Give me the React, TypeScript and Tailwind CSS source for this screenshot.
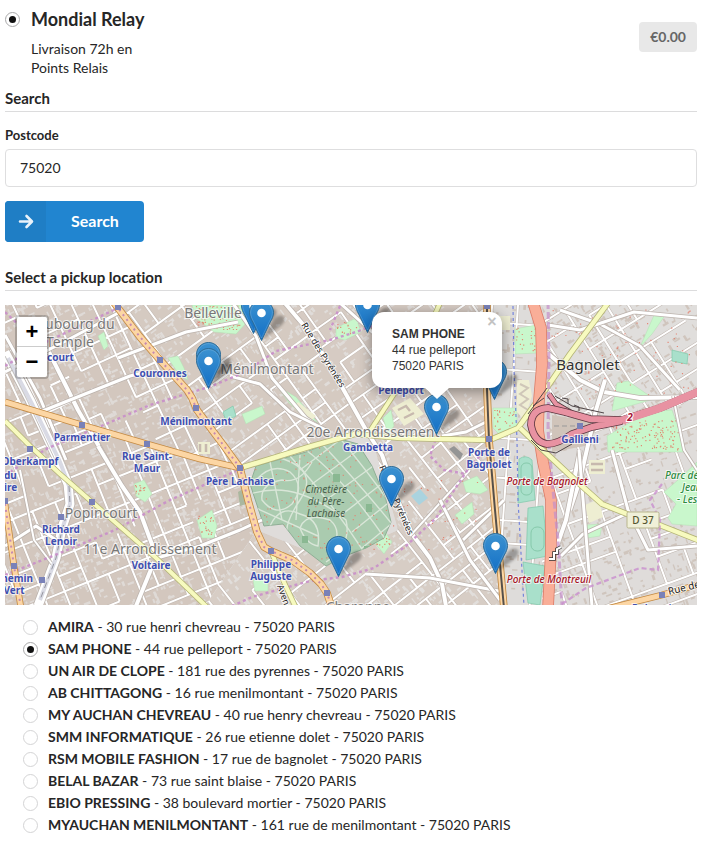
import React, { useState } from "react";

const LATO = "font-['Lato','Noto_Sans',sans-serif]";

type Pickup = { name: string; address: string };

const pickups: Pickup[] = [
  { name: "AMIRA", address: "30 rue henri chevreau - 75020 PARIS" },
  { name: "SAM PHONE", address: "44 rue pelleport - 75020 PARIS" },
  { name: "UN AIR DE CLOPE", address: "181 rue des pyrennes - 75020 PARIS" },
  { name: "AB CHITTAGONG", address: "16 rue menilmontant - 75020 PARIS" },
  { name: "MY AUCHAN CHEVREAU", address: "40 rue henry chevreau - 75020 PARIS" },
  { name: "SMM INFORMATIQUE", address: "26 rue etienne dolet - 75020 PARIS" },
  { name: "RSM MOBILE FASHION", address: "17 rue de bagnolet - 75020 PARIS" },
  { name: "BELAL BAZAR", address: "73 rue saint blaise - 75020 PARIS" },
  { name: "EBIO PRESSING", address: "38 boulevard mortier - 75020 PARIS" },
  { name: "MYAUCHAN MENILMONTANT", address: "161 rue de menilmontant - 75020 PARIS" },
];

const radioClass =
  "grid size-[15px] shrink-0 appearance-none place-items-center rounded-full border border-[#d4d4d5] bg-white checked:border-[#a9a9aa] checked:before:size-[7px] checked:before:rounded-full checked:before:bg-[#111111] checked:before:content-['']";

function random(seed: number) {
  let s = seed;
  return () => {
    s = (s * 16807) % 2147483647;
    return s / 2147483647;
  };
}

type District = {
  id: string;
  area: string;
  cx: number;
  cy: number;
  r: number;
  angle: number;
  fill: string;
  houses: string;
  density: number;
  cell: number;
};

const districts: District[] = [
  { id: "d1", area: "M0 300H115L160 360L196 408L240 468L0 400Z", cx: 110, cy: 380, r: 160, angle: -25, fill: "#d3c7be", houses: "#e0dddb", density: 9, cell: 18 },
  { id: "d2", area: "M0 400L240 468L257 530L205 606H0Z", cx: 110, cy: 510, r: 170, angle: -22, fill: "#d3c7be", houses: "#e0dddb", density: 9, cell: 18 },
  { id: "d3", area: "M115 300H290L340 380L370 432L240 468L196 408Z", cx: 245, cy: 380, r: 150, angle: -36, fill: "#d5cac1", houses: "#e2dfdd", density: 8, cell: 21 },
  { id: "d4", area: "M285 300H490V440L370 432L340 380Z", cx: 400, cy: 370, r: 140, angle: 55, fill: "#d6cbc3", houses: "#e2dfdd", density: 9, cell: 22 },
  { id: "d5", area: "M370 432L490 440L504 606H205L257 530L330 560L398 530Z", cx: 370, cy: 520, r: 190, angle: -38, fill: "#d7cdc5", houses: "#e3e0de", density: 9, cell: 21 },
  { id: "d6", area: "M487 300H542V606H504Z", cx: 515, cy: 450, r: 180, angle: 4, fill: "#dedcda", houses: "#cabdb3", density: 8, cell: 28 },
  { id: "d7", area: "M542 300H700V400L550 440Z", cx: 620, cy: 360, r: 130, angle: 58, fill: "#e0dedc", houses: "#cdc1b7", density: 8, cell: 24 },
  { id: "d8", area: "M542 440L700 400V606H542Z", cx: 620, cy: 520, r: 145, angle: 70, fill: "#dfdcda", houses: "#cdc1b7", density: 10, cell: 23 },
];

function buildDistrict(d: District, seed: number) {
  const rnd = random(seed);
  const xs: number[] = [];
  const ys: number[] = [];
  for (let v = -d.r; v < d.r; v += d.cell * (0.6 + rnd() * 0.8)) xs.push(v);
  for (let v = -d.r; v < d.r; v += d.cell * (0.6 + rnd() * 1.1)) ys.push(v);
  let streets = "";
  let houses = "";
  for (let i = 0; i < xs.length - 1; i++) {
    for (let j = 0; j < ys.length - 1; j++) {
      if (rnd() > 0.2) streets += `M${xs[i].toFixed(1)} ${ys[j].toFixed(1)}V${ys[j + 1].toFixed(1)}`;
      if (rnd() > 0.25) streets += `M${xs[i].toFixed(1)} ${ys[j].toFixed(1)}H${xs[i + 1].toFixed(1)}`;
      for (let k = 0; k < d.density; k++) {
        const x = xs[i] + rnd() * (xs[i + 1] - xs[i] - 3);
        const y = ys[j] + rnd() * (ys[j + 1] - ys[j] - 3);
        const tall = rnd() > 0.5;
        const w = tall ? 1.2 + rnd() * 1.5 : 2 + rnd() * 5;
        const h = tall ? 2 + rnd() * 5 : 1.2 + rnd() * 1.5;
        houses += `M${x.toFixed(1)} ${y.toFixed(1)}h${w.toFixed(1)}v${h.toFixed(1)}h-${w.toFixed(1)}z`;
      }
    }
  }
  return { streets, house: houses };
}

function dots(seed: number, n: number, x: number, y: number, w: number, h: number) {
  const rnd = random(seed);
  let p = "";
  for (let i = 0; i < n; i++) p += `M${(x + rnd() * w).toFixed(1)} ${(y + rnd() * h).toFixed(1)}h1.2`;
  return p;
}

const built = districts.map((d, i) => ({ ...d, ...buildDistrict(d, 971 + i * 577) }));

const CEMETERY =
  "M250 484L256 466L306 452L340 439L358 444L372 466L386 500L391 522L384 538L366 548L345 556L326 566L300 546L283 524L264 526Z";

const parks = [
  "M192 305H244L249 320L236 334L214 332L196 318Z",
  "M277 386L296 397L318 423L308 421L289 403Z",
  "M242 414L262 406L265 414L246 424Z",
  "M336 328L356 318L361 332L345 340L336 338Z",
  "M383 418L391 410L394 426L388 434Z",
  "M168 358L178 356L184 368L188 380L180 376Z",
  "M134 484L144 480L152 494L145 502L136 496Z",
  "M197 520L212 510L217 526L214 538L202 538Z",
  "M98 336L104 332L108 346L104 350Z",
  "M372 540L384 530L392 542L384 554Z",
  "M455 515L472 502L474 514L462 524Z",
  "M253 580L268 580L268 591L255 591Z",
  "M493 408H517V430L500 435L493 428Z",
  "M515 329L536 325L537 353L515 354Z",
  "M640 347L655 313L666 314L652 334Z",
  "M607 436L650 411L672 410L679 430L684 452H608Z",
  "M617 383L628 381L654 399L612 411Z",
  "M697 462L678 480L664 492L676 504L668 518L672 524L697 526Z",
  "M463 482L477 476L488 490L480 494L466 492Z",
  "M586 525L602 524L600 536L587 538Z",
];

const pitches = [
  "M519 459Q526 454 532 460L535 500L518 503Z",
  "M528 508L543 506L548 556L526 560Z",
  "M523 562L545 566L540 605L528 603Z",
  "M223 412L233 406L236 416L226 421Z",
  "M672 350L688 354L687 364L672 361Z",
];

const whiteRoads: [string, number][] = [
  ["M5 352L30 400L58 460L68 484L70 504L62 528L56 558L38 606", 9],
  ["M5 335L40 398L66 460", 3],
  ["M48 350L78 410L108 462", 4],
  ["M98 446L122 486L140 512L157 558", 4],
  ["M154 562L136 606", 4],
  ["M157 558L200 546L240 530L262 520", 3],
  ["M284 302L306 328L328 362L347 396L366 430L382 455L397 498L412 534L430 558L442 584L446 606", 4],
  ["M5 372L60 344L120 312", 3],
  ["M40 412L130 376L146 372", 3],
  ["M118 358L186 332L238 322", 3],
  ["M232 302L256 336L272 378L306 418L318 426", 3],
  ["M230 376L260 384L290 412L330 432", 3],
  ["M340 303L370 330L396 352L420 376L434 396", 3],
  ["M442 436L466 432L490 420", 3],
  ["M366 574L430 578L504 592", 3],
  ["M410 536L470 470", 2],
  ["M546 352L580 380L604 392L640 398L697 397", 4],
  ["M605 380L596 410L590 436L580 480L570 510", 4],
  ["M580 450L566 520L552 560", 4],
  ["M561 556L583 534L626 514", 3],
  ["M579 450L588 560L592 606", 3],
  ["M612 450L628 510L648 550L697 546", 3],
  ["M560 310L600 324L640 346L680 390", 3],
  ["M548 325L580 330L634 312L697 318", 3],
  ["M673 396L684 450L697 470", 2],
  ["M463 540L504 500", 3],
  ["M440 500L470 560L500 600", 3],
  ["M5 546L36 526L56 540", 3],
  ["M20 470L34 540L52 564", 2],
];

function Street({ d, w, fill, edge, dash }: { d: string; w: number; fill: string; edge: string; dash?: boolean }) {
  return (
    <g fill="none" strokeLinejoin="round">
      <path d={d} stroke={edge} strokeWidth={w + 1.6} />
      <path d={d} stroke={fill} strokeWidth={w} />
      {dash && <path d={d} stroke="#b877b4" strokeWidth={2} strokeDasharray="2 4" opacity={0.8} />}
    </g>
  );
}

type MapLabel = { x: number; y: number; t: string; s: number; kind: "area" | "metro" | "exit" | "park"; anchor?: "start" | "middle" };

const labels: MapLabel[] = [
  { x: 45, y: 329, t: "ubourg du", s: 14, kind: "area", anchor: "start" },
  { x: 46, y: 347, t: "Temple", s: 14, kind: "area", anchor: "start" },
  { x: 213, y: 318, t: "Belleville", s: 14, kind: "area" },
  { x: 267, y: 374, t: "Ménilmontant", s: 14, kind: "area" },
  { x: 373, y: 437, t: "20e Arrondissement", s: 14, kind: "area" },
  { x: 101, y: 518, t: "Popincourt", s: 14, kind: "area" },
  { x: 150, y: 554, t: "11e Arrondissement", s: 14, kind: "area" },
  { x: 358, y: 612, t: "Charonne", s: 14, kind: "area" },
  { x: 47, y: 361, t: "court", s: 10, kind: "metro", anchor: "start" },
  { x: 160, y: 377, t: "Couronnes", s: 10, kind: "metro" },
  { x: 196, y: 425, t: "Ménilmontant", s: 10, kind: "metro" },
  { x: 82, y: 441, t: "Parmentier", s: 10, kind: "metro" },
  { x: 147, y: 460, t: "Rue Saint-", s: 10, kind: "metro" },
  { x: 147, y: 472, t: "Maur", s: 10, kind: "metro" },
  { x: 30, y: 465, t: "Oberkampf", s: 10, kind: "metro" },
  { x: 4, y: 479, t: "du", s: 10, kind: "metro", anchor: "start" },
  { x: 4, y: 491, t: "ire", s: 10, kind: "metro", anchor: "start" },
  { x: 240, y: 485, t: "Père Lachaise", s: 10, kind: "metro" },
  { x: 61, y: 533, t: "Richard", s: 10, kind: "metro" },
  { x: 61, y: 545, t: "Lenoir", s: 10, kind: "metro" },
  { x: 151, y: 569, t: "Voltaire", s: 10, kind: "metro" },
  { x: 14, y: 582, t: "Chemin", s: 10, kind: "metro" },
  { x: 14, y: 594, t: "Vert", s: 10, kind: "metro" },
  { x: 271, y: 568, t: "Philippe", s: 10, kind: "metro" },
  { x: 271, y: 580, t: "Auguste", s: 10, kind: "metro" },
  { x: 368, y: 451, t: "Gambetta", s: 10, kind: "metro" },
  { x: 401, y: 394, t: "Pelleport", s: 10, kind: "metro" },
  { x: 489, y: 456, t: "Porte de", s: 10, kind: "metro" },
  { x: 489, y: 468, t: "Bagnolet", s: 10, kind: "metro" },
  { x: 580, y: 443, t: "Gallieni", s: 10, kind: "metro" },
  { x: 662, y: 612, t: "Robespierre", s: 10, kind: "metro" },
  { x: 547, y: 485, t: "Porte de Bagnolet", s: 10, kind: "exit" },
  { x: 549, y: 583, t: "Porte de Montreuil", s: 10, kind: "exit" },
  { x: 665, y: 479, t: "Parc dép", s: 10, kind: "park", anchor: "start" },
  { x: 682, y: 491, t: "Jean", s: 10, kind: "park", anchor: "start" },
  { x: 677, y: 503, t: "- Les", s: 10, kind: "park", anchor: "start" },
];

const labelStyle = {
  area: { fill: "#777777", weight: 400, style: "normal" },
  metro: { fill: "#3f4fb0", weight: 700, style: "normal" },
  exit: { fill: "#a51426", weight: 500, style: "italic" },
  park: { fill: "#2d8a3e", weight: 500, style: "italic" },
};

const stations = [
  [118, 307], [160, 360], [196, 408], [240, 468], [271, 551], [327, 593], [82, 425], [147, 444], [30, 449],
  [92, 502], [61, 517], [14, 566], [42, 580], [5, 501], [489, 439], [580, 426], [662, 595], [487, 306],
];

const markers = [
  [253, 334], [261, 341], [208, 383], [208, 389], [367, 333], [494, 400], [436, 435], [391, 507], [338, 577], [495, 574],
];

function Marker({ x, y }: { x: number; y: number }) {
  return (
    <g transform={`translate(${x - 12} ${y - 41})`}>
      <path d="M13 40L24 20Q30 13 35 17Q37 22 30 27Z" fill="#000" opacity={0.3} filter="url(#soft)" />
      <path
        d="M12.5 .5C5.9 .5 .5 5.9 .5 12.5c0 3.6 1.5 6.6 3.2 9.5L12.5 40.5 21.3 22c1.7-2.9 3.2-5.9 3.2-9.5C24.5 5.9 19.1 .5 12.5 .5z"
        fill="url(#pin)"
        stroke="#2e6c97"
      />
      <path d="M12.5 1.6C6.5 1.6 1.6 6.5 1.6 12.5c0 3.4 1.4 6.1 3 9L12.5 38l7.9-16.5c1.6-2.9 3-5.6 3-9C23.4 6.5 18.5 1.6 12.5 1.6z" fill="none" stroke="#fff" opacity={0.15} />
      <circle cx="12.5" cy="13" r="4.3" fill="#fff" />
    </g>
  );
}

function StreetMap() {
  const ringRoad = "M533 302L541 328L542 365L539 400L538 430L543 462L551 500L551 550L548 608";
  const motorway = "M700 391L660 408L622 420L590 419L565 412L548 408Q531 409 531 425Q534 442 547 444Q558 444 572 434L592 427L622 421";
  const ramp = "M549 394L556 404L575 415";
  return (
    <svg
      viewBox="5 305 692 300"
      preserveAspectRatio="xMidYMid slice"
      className="block h-[300px] w-full bg-[#dfdcda] font-['Noto_Sans','Open_Sans',sans-serif]"
      role="img"
      aria-label="Map of pickup points"
    >
      <defs>
        <linearGradient id="pin" x1="0" y1="0" x2="0" y2="1">
          <stop offset="0" stopColor="#3c92d0" />
          <stop offset="1" stopColor="#126fc6" />
        </linearGradient>
        <filter id="soft" x="-30%" y="-30%" width="160%" height="160%">
          <feGaussianBlur stdDeviation="1.5" />
        </filter>
        <clipPath id="cemetery">
          <path d={CEMETERY} />
        </clipPath>
        {built.map((d) => (
          <clipPath id={d.id} key={d.id}>
            <path d={d.area} />
          </clipPath>
        ))}
      </defs>

      {built.map((d) => (
        <g key={d.id} clipPath={`url(#${d.id})`}>
          <path d={d.area} fill={d.fill} />
          <g transform={`translate(${d.cx} ${d.cy}) rotate(${d.angle})`}>
            <path d={d.house} fill={d.houses} opacity={0.85} />
            <path d={d.streets} stroke="#bfb5ae" strokeWidth={3} fill="none" />
            <path d={d.streets} stroke="#fff" strokeWidth={2} fill="none" />
          </g>
        </g>
      ))}

      <g fill="#c9f7cc" stroke="#b5dfb5" strokeWidth={0.5}>
        {parks.map((p) => (
          <path key={p} d={p} />
        ))}
      </g>
      <g fill="#a9e0cb" stroke="#7fc9ab" strokeWidth={0.7}>
        {pitches.map((p) => (
          <path key={p} d={p} />
        ))}
      </g>
      <g fill="none" stroke="#86c9ab">
        <rect x="521" y="463" width="11" height="32" rx="5" />
        <rect x="531" y="527" width="13" height="24" rx="6" />
      </g>
      <path d="M517 380L529 380L532 396L524 420L517 412Z" fill="#efeed4" />
      <path d="M520 384l8 4-8 6 8 5-8 6 8 5" fill="none" stroke="#cfc6b8" strokeWidth={2} />
      <path d="M552 415L585 420L600 424L585 446L552 452Z" fill="#d0c4ba" />
      <path d="M554 426H578" stroke="#999" strokeDasharray="5 3" />
      <path d="M411 496l9-7 8 9-9 7z" fill="#aad3df" />
      <path d="M449 449l5-3 9 8-3 6z" fill="#959595" />
      <g fill="#eeeed2">
        <path d="M392 408l18-10 14 16-20 12z" />
        <path d="M198 442h12v12h-12z" />
        <path d="M298 402l18 14-6 6-16-14z" />
        <path d="M589 460h16v14h-16z" />
        <path d="M585 505l14-6 4 18-14 6z" />
        <path d="M498 316h12v14h-12z" />
      </g>
      <g fill="none" stroke="#c7b9ae" strokeWidth={2.5}>
        <path d="M398 410l8-4 4 5M404 418l10-5M200 444v8M206 444v8M591 464h12M591 470h12" />
      </g>
      <path
        d={dots(41, 90, 194, 306, 46, 24) + dots(7, 130, 612, 420, 66, 30) + dots(19, 22, 516, 328, 20, 24) + dots(3, 24, 494, 410, 20, 20) + dots(9, 22, 198, 515, 16, 20) + dots(11, 16, 337, 322, 22, 14) + dots(8, 14, 135, 485, 12, 12) + dots(91, 90, 550, 310, 140, 90) + dots(77, 60, 370, 480, 110, 70) + dots(5, 18, 372, 534, 18, 16)}
        stroke="#e5735f"
        strokeWidth={1.2}
        opacity={0.8}
      />

      <path d={CEMETERY} fill="#aacbaf" stroke="#8fae95" />
      <g clipPath="url(#cemetery)">
        <g fill="none" stroke="#d9e6d8" strokeWidth={1.4}>
          <path d="M306 450Q345 480 386 540M322 444Q356 480 392 524M338 436Q370 474 396 512M290 456Q330 500 364 552" />
          <path d="M300 470L345 436M312 484L364 446M326 500L376 464M340 516L384 482M352 532L392 500M362 548L396 520" />
          <path d="M256 480Q272 462 290 472Q306 486 292 504Q276 518 262 500Q260 484 282 480Q300 484 312 462" />
          <path d="M250 494Q276 486 300 494T346 520Q352 546 326 562" />
          <path d="M270 526Q280 504 300 514Q322 520 318 546Q306 544 300 528Q306 512 330 520Q344 532 330 552" />
          <path d="M270 462L282 520M300 455L296 520M256 508L318 536M280 458Q320 470 300 500T290 540" />
        </g>
        <path d={dots(55, 150, 255, 442, 132, 118)} stroke="#dd8a77" strokeWidth={1.2} />
        <g fill="#8ab892">
          <path d="M333 474h7v8h-7zM366 504h6v8h-6zM302 536h6v7h-6zM364 546h10v6h-10z" />
        </g>
      </g>
      <path d="M248 486l-10 6 2 14 12-4z" fill="#aab79f" />

      {whiteRoads.map(([d, w]) => (
        <Street key={d} d={d} w={w} fill="#ffffff" edge="#bcb3ad" />
      ))}
      <path d="M8 358L32 404L60 462L69 486L70 504L62 530L56 558L40 600" fill="none" stroke="#d9dae4" strokeWidth={4} />
      <path d="M5 356L28 402L56 462" fill="none" stroke="#aaa6a4" strokeWidth={0.7} />
      <path d="M69 486L70 504L62 530L56 558L40 600" fill="none" stroke="#77777f" strokeWidth={0.7} strokeDasharray="6 4" />

      <g fill="none" stroke="#c98fca" strokeWidth={2.4} strokeDasharray="3 3" opacity={0.9}>
        <path d="M5 575L60 553L115 530L170 500L236 471" />
        <path d="M5 475L48 448L92 430L150 405L212 386L245 372L276 351L330 340L356 332L372 326" />
        <path d="M5 366L40 345L118 308M5 312L24 330M340 306L330 330" />
        <path d="M232 606L252 597L310 581L342 577L374 568L406 546L436 518L470 466L486 450" />
        <path d="M432 350L436 438L430 456L444 470L466 474" />
      </g>
      <path d="M513 306L514 370L517 440L518 500L524 606" fill="none" stroke="#7685dc" strokeWidth={1.2} strokeDasharray="3 3" />

      <Street d="M5 421L30 446L60 474L92 502L155 557L208 608" w={4} fill="#f7fabf" edge="#b4b477" />
      <Street d="M240 468L270 459L312 446L355 434L400 438L440 439L490 440L518 428L548 386L570 354L608 303" w={4.5} fill="#f7fabf" edge="#b4b477" />
      <Street d="M370 431L394 394L428 330L440 303" w={4} fill="#f7fabf" edge="#b4b477" />
      <Street d="M271 551L282 578L296 608" w={4} fill="#f7fabf" edge="#b4b477" />
      <Street d="M487 302V390L489 440L495 510L504 608" w={6} fill="#fcd6a4" edge="#bd8540" />
      <path d="M487 302V390L489 440L495 510L504 608" stroke="#55504b" strokeWidth={2} fill="none" />
      <Street d="M5 402L82 425L147 444L200 459L240 468" w={5} fill="#fcd6a4" edge="#c48a43" />
      <Street d="M5 504L14 566L21 608" w={5} fill="#fcd6a4" edge="#c48a43" dash />
      <Street d="M112 300L118 308L140 337L160 360L187 390L192 398L197 410L224 446L240 468L248 500L257 532L264 547L271 551L292 560L310 573L321 584L327 593L332 608" w={6} fill="#fcd6a4" edge="#c48a43" dash />
      <Street d="M610 608L662 595L700 584" w={5} fill="#fcd6a4" edge="#c48a43" />

      <Street d={ringRoad} w={10} fill="#f9ae98" edge="#db7c68" />
      <path d="M548 302L549 360L548 430L552 480L558 540L562 606" fill="none" stroke="#c48fc9" strokeWidth={3} strokeDasharray="7 3" opacity={0.7} />
      <Street d="M520 428L545 452L575 480L602 504L637 518L662 526L700 541" w={4.5} fill="#f7fabf" edge="#b4b477" />
      <Street d={ramp} w={4} fill="#e892a2" edge="#4b3638" />
      <Street d={motorway} w={6} fill="#e892a2" edge="#5d3640" />
      <path d="M547 388L528 414M544 398L533 406M555 396L572 406L604 413M531 440L541 450L556 453L572 444M562 398l6 1v5M574 405l5 2v4" fill="none" stroke="#4f4648" strokeWidth={1} />
      <path d="M700 391L660 408L622 420.5" stroke="#e892a2" strokeWidth={8} fill="none" />
      <path d="M549 559h5v-6h3v-4l4-2" fill="none" stroke="#333" strokeWidth={3.5} />
      <path d="M549 559h5v-6h3v-4l4-2" fill="none" stroke="#fff" strokeWidth={2} />
      <path d="M562 604L586 588L640 568L658 570L660 520L650 500L662 484" fill="none" stroke="#c98fce" strokeWidth={2.2} strokeDasharray="5 3" opacity={0.8} />

      {stations.map(([x, y]) => (
        <rect key={`${x}-${y}`} x={x - 3} y={y - 3} width={6} height={6} fill="#7981b8" />
      ))}

      {labels.map((l) => {
        const k = labelStyle[l.kind];
        return (
          <text
            key={`${l.t}-${l.x}-${l.y}`}
            x={l.x}
            y={l.y}
            fontSize={l.s}
            fill={k.fill}
            fontWeight={k.weight}
            fontStyle={k.style}
            textAnchor={l.anchor ?? "middle"}
            stroke="#ffffff"
            strokeOpacity={0.7}
            strokeWidth={2}
            paintOrder="stroke"
          >
            {l.t}
          </text>
        );
      })}
      <text x="588" y="370" fontSize="15" fill="#333" textAnchor="middle" stroke="#fff" strokeOpacity={0.6} strokeWidth={2} paintOrder="stroke">Bagnolet</text>
      <g fontSize="10" fontStyle="italic" fill="#48604a" textAnchor="middle">
        <text x="326" y="493">Cimetière</text>
        <text x="326" y="505">du Père-</text>
        <text x="326" y="517">Lachaise</text>
      </g>
      <g fontSize="9" fill="#222" stroke="#fff" strokeOpacity={0.8} strokeWidth={2} paintOrder="stroke">
        <text transform="translate(301 325) rotate(58)">Rue des Pyrénées</text>
        <text transform="translate(379 467) rotate(67)">Rue des Pyrénées</text>
        <text transform="translate(277 586) rotate(70)">Avenue</text>
        <text transform="translate(669 595) rotate(-14)" fontSize="10">Rue de Paris</text>
      </g>
      <text x="630" y="421" fontSize="10" fontStyle="italic" fontWeight="700" fill="#a51436" textAnchor="middle" stroke="#fff" strokeWidth={2} paintOrder="stroke">2</text>
      <rect x="627" y="512" width="32" height="16" rx="1.5" fill="#f0f0d8" stroke="#b8b58c" />
      <text x="643" y="524" fontSize="10" fontWeight="500" fill="#55552f" textAnchor="middle">D 37</text>

      {markers.map(([x, y]) => (
        <Marker key={`${x}-${y}`} x={x} y={y} />
      ))}
    </svg>
  );
}

function SectionTitle({ children }: { children: React.ReactNode }) {
  return <h4 className="border-b border-[#dcdcdd] pb-1 text-[15px] leading-[18px] font-bold">{children}</h4>;
}

export default function App() {
  const [selected, setSelected] = useState(1);
  const [postcode, setPostcode] = useState("75020");
  return (
    <main className={`${LATO} bg-white pt-2 pr-[6px] pb-2 pl-[5px] text-sm text-[#262626] [font-variant-ligatures:none]`}>
      <header className="flex items-start justify-between">
        <div className="flex gap-[11px]">
          <input id="mondial" type="radio" name="shipping" defaultChecked className={`${radioClass} mt-1`} />
          <div>
            <label htmlFor="mondial" className="block text-lg leading-[23px] font-bold">Mondial Relay</label>
            <p className="mt-2 w-32 leading-[19px]">Livraison 72h en Points Relais</p>
          </div>
        </div>
        <span className="mt-[14px] rounded-[4px] bg-[#e8e8e8] px-[11px] leading-[30px] font-bold text-[#666666]">€0.00</span>
      </header>

      <section className="mt-3">
        <SectionTitle>Search</SectionTitle>
        <label htmlFor="postcode" className="mt-[14px] mb-[5px] block text-[13px] leading-[18px] font-bold">Postcode</label>
        <input
          id="postcode"
          value={postcode}
          onChange={(e) => setPostcode(e.target.value)}
          className="block h-[38px] w-full rounded-[4px] border border-[#dededf] px-[14px] pb-[2px] outline-none"
        />
        <button type="button" className="mt-[14px] flex h-[41px] overflow-hidden rounded-[4px] bg-[#2185d0] text-base font-bold text-white">
          <span className="flex h-full w-[41px] items-center justify-center bg-[#1f7ec5]">
            <svg viewBox="0 0 16 16" className="size-4" fill="none" stroke="#e9f2fa" strokeWidth="2.6" strokeLinecap="round" strokeLinejoin="round" aria-hidden="true">
              <path d="M2 7.500H13.500M8.500 2L14 7.500L8.500 13" />
            </svg>
          </span>
          <span className="px-[25px] leading-[39px]">Search</span>
        </button>
      </section>

      <section className="mt-[26px]">
        <SectionTitle>Select a pickup location</SectionTitle>
        <div className="relative mt-[14px] overflow-hidden">
          <StreetMap />
          <div className="absolute top-[10px] left-[10px] rounded-[4px] border-2 border-black/20 bg-clip-padding font-['Liberation_Sans',Arial,sans-serif] text-[22px] font-bold text-black">
            <button type="button" aria-label="Zoom in" className="block size-[30px] rounded-t-[2px] border-b border-[#cccccc] bg-white leading-[28px]">+</button>
            <button type="button" aria-label="Zoom out" className="block size-[30px] rounded-b-[2px] bg-white leading-[28px]">−</button>
          </div>
          <div className="absolute top-[7px] left-[367px] h-[76px] w-[130px] rounded-xl bg-white py-[14px] pl-5 font-['Liberation_Sans',Arial,sans-serif] text-xs leading-4 text-[#333333] shadow-[0_3px_14px_rgba(0,0,0,0.4)]">
            <strong className="block">SAM PHONE</strong>
            <span className="block">44 rue pelleport</span>
            <span className="block">75020 PARIS</span>
            <button type="button" aria-label="Close" className="absolute top-0 right-0 size-5 text-base leading-5 font-bold text-[#c3c3c3]">×</button>
            <svg viewBox="0 0 24 12" className="absolute top-full left-[53px] h-3 w-6" aria-hidden="true">
              <path d="M0 0H24L12 11Z" fill="#fff" />
            </svg>
          </div>
        </div>
        <ul className="mt-[11px] pl-[18px]">
          {pickups.map((p, i) => (
            <li key={p.name}>
              <label className="flex items-center gap-[10px] leading-[22px]">
                <input type="radio" name="pickup" checked={selected === i} onChange={() => setSelected(i)} className={radioClass} />
                <span>
                  <strong>{p.name}</strong> - {p.address}
                </span>
              </label>
            </li>
          ))}
        </ul>
      </section>
    </main>
  );
}
